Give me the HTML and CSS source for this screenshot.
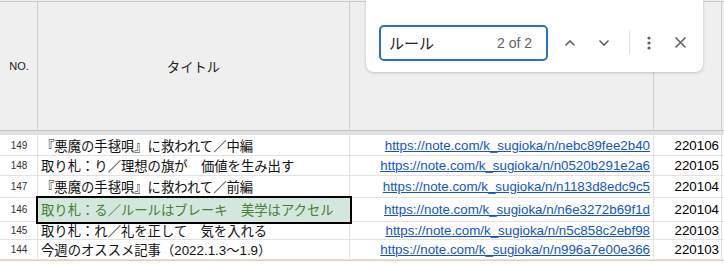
FILE: index.html
```html
<!DOCTYPE html>
<html lang="ja">

<head>
    <meta charset="UTF-8">
    <meta name="viewport" content="width=device-width, initial-scale=1.0">
    <title>記事一覧</title>
    <link rel="stylesheet" href="styles.css">
</head>

<body>
    <div class="sheet">
        <div class="top_line"></div>
        <div class="grid head_row">
            <div class="cell head no">NO.</div>
            <div class="cell head">タイトル</div>
            <div class="cell head"></div>
            <div class="cell head"></div>
            <div class="cell head last"></div>
        </div>
        <div class="freeze"></div>
        <div class="grid body_rows">
            <div class="cell num">149</div>
            <div class="cell title">『悪魔の手毬唄』に救われて／中編</div>
            <div class="cell url"><a href="javascript:;">https://note.com/k_sugioka/n/nebc89fee2b40</a></div>
            <div class="cell date">220106</div>
            <div class="cell last"></div>

            <div class="cell num">148</div>
            <div class="cell title">取り札：り／理想の旗が　価値を生み出す</div>
            <div class="cell url"><a href="javascript:;">https://note.com/k_sugioka/n/n0520b291e2a6</a></div>
            <div class="cell date">220105</div>
            <div class="cell last"></div>

            <div class="cell num">147</div>
            <div class="cell title">『悪魔の手毬唄』に救われて／前編</div>
            <div class="cell url"><a href="javascript:;">https://note.com/k_sugioka/n/n1183d8edc9c5</a></div>
            <div class="cell date">220104</div>
            <div class="cell last"></div>

            <div class="cell num">146</div>
            <div class="cell title current">取り札：る／ルールはブレーキ　美学はアクセル</div>
            <div class="cell url"><a href="javascript:;">https://note.com/k_sugioka/n/n6e3272b69f1d</a></div>
            <div class="cell date">220104</div>
            <div class="cell last"></div>

            <div class="cell num">145</div>
            <div class="cell title">取り札：れ／礼を正して　気を入れる</div>
            <div class="cell url"><a href="javascript:;">https://note.com/k_sugioka/n/n5c858c2ebf98</a></div>
            <div class="cell date">220103</div>
            <div class="cell last"></div>

            <div class="cell num">144</div>
            <div class="cell title">今週のオススメ記事（2022.1.3〜1.9）</div>
            <div class="cell url"><a href="javascript:;">https://note.com/k_sugioka/n/n996a7e00e366</a></div>
            <div class="cell date">220103</div>
            <div class="cell last"></div>
        </div>
        <div class="bottom_line"></div>

        <!-- 検索バー -->
        <div class="findbar">
            <div class="find_input">
                <span class="query">ルール</span>
                <span class="count">2 of 2</span>
            </div>
            <a href="javascript:;" class="icon_btn up">
                <svg width="12" height="8" viewBox="0 0 12 8"><path d="M1.5 6.5 L6 2 L10.5 6.5" /></svg>
            </a>
            <a href="javascript:;" class="icon_btn down">
                <svg width="12" height="8" viewBox="0 0 12 8"><path d="M1.5 1.5 L6 6 L10.5 1.5" /></svg>
            </a>
            <span class="divider"></span>
            <a href="javascript:;" class="icon_btn more">
                <svg width="4" height="14" viewBox="0 0 4 14"><circle cx="2" cy="2" r="1.6" /><circle cx="2" cy="7" r="1.6" /><circle cx="2" cy="12" r="1.6" /></svg>
            </a>
            <a href="javascript:;" class="icon_btn close">
                <svg width="13" height="13" viewBox="0 0 13 13"><path d="M1.5 1.5 L11.5 11.5 M11.5 1.5 L1.5 11.5" /></svg>
            </a>
        </div>
    </div>
</body>

</html>
```

FILE: styles.css
```css
* {
    margin: 0;
    padding: 0;
    box-sizing: border-box;
}

body {
    background: #fff;
    font-family: "Liberation Sans", Arial, "Noto Sans CJK JP", sans-serif;
    color: #222;
}

body a {
    color: #1155cc;
}

.sheet {
    width: 724px;
    height: 264px;
    position: relative;
    overflow: hidden;
}

.top_line {
    height: 2px;
    background: #efefef;
    border-bottom: 1px solid #c8c8c8;
}

.grid {
    display: grid;
    grid-template-columns: 38px 312px 304px 68px 1fr;
}

.cell {
    display: flex;
    align-items: center;
    border-right: 1px solid #e2e2e2;
    border-bottom: 1px solid #e2e2e2;
    white-space: nowrap;
    overflow: hidden;
    font-size: 10pt;
}

.cell.last {
    border-right: none;
}

/* 見出し行 */
.head_row {
    grid-template-rows: 129px;
}

.head {
    background: #efefef;
    border-right-color: #cfcfcf;
    border-bottom-color: #c4c4c4;
    justify-content: center;
    color: #222;
}

.head.no {
    font-size: 11px;
    padding-left: 1px;
}

.freeze {
    height: 4px;
    background: #dfe1e4;
}

/* データ行 */
.body_rows {
    grid-template-rows: 21px 20px 22px 24px 18px 20px;
}

.num {
    justify-content: center;
    font-size: 10px;
    color: #333;
    padding-left: 1px;
}

.title {
    padding-left: 3px;
    color: #111;
}

.title.current {
    background: #d2e8dc;
    color: #4a7d35;
    outline: 2px solid #000;
    position: relative;
    z-index: 1;
}

.url {
    justify-content: flex-end;
    padding-right: 3px;
}

.date {
    justify-content: flex-end;
    padding-right: 2px;
    color: #000;
}

.bottom_line {
    height: 2px;
    border-top: 1px solid #f6c9a4;
}

/* 検索バー */
.findbar {
    position: absolute;
    left: 366px;
    top: 0;
    width: 337px;
    height: 72px;
    background: #fff;
    border-radius: 0 0 8px 8px;
    box-shadow: 0 1px 3px rgba(60, 64, 67, 0.25);
    display: flex;
    align-items: center;
    padding: 13px 0 0 13px;
}

.find_input {
    width: 169px;
    height: 36px;
    border: 2px solid #2a6fd0;
    border-radius: 5px;
    display: flex;
    align-items: center;
    justify-content: space-between;
    padding: 0 14px 0 8px;
}

.query {
    font-family: "Noto Sans CJK JP", sans-serif;
    font-size: 15px;
    color: #202124;
}

.count {
    font-family: "Liberation Sans", Arial, sans-serif;
    font-size: 14px;
    color: #5f6368;
}

.icon_btn {
    width: 28px;
    height: 28px;
    display: flex;
    align-items: center;
    justify-content: center;
}

.icon_btn svg path {
    fill: none;
    stroke: #5f6368;
    stroke-width: 1.6;
}

.icon_btn svg circle {
    fill: #5f6368;
}

.up {
    margin-left: 8px;
}

.down {
    margin-left: 6px;
}

.divider {
    width: 1px;
    height: 23px;
    background: #dadce0;
    margin-left: 11px;
}

.more {
    margin-left: 5px;
}

.close {
    margin-left: 3px;
}
```
